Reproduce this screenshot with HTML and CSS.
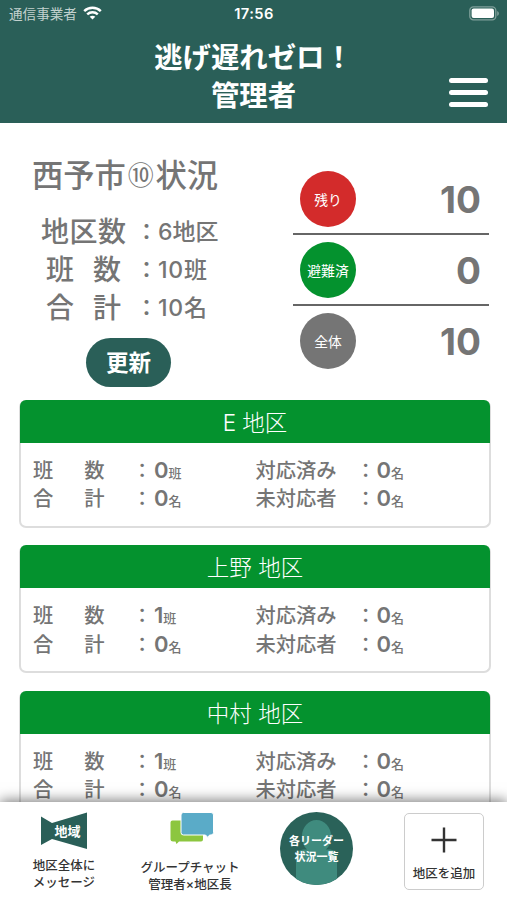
FILE: index.html
```html
<!DOCTYPE html>
<html lang="ja">
<head>
<meta charset="utf-8">
<meta name="viewport" content="width=device-width, initial-scale=1">
<title>逃げ遅れゼロ！管理者</title>
<link rel="stylesheet" href="styles.css">
</head>
<body>
<div class="app">
  <header class="header">
    <div class="status">
      <div class="carrier">通信事業者
        <svg class="wifi" width="19" height="14" viewBox="0 0 19 14" fill="none" stroke="#fff" stroke-width="2.5"><path d="M1.2 5.1C5.8.7 13.2.7 17.8 5.1"/><path d="M4.2 8.4c3-2.8 7.6-2.8 10.6 0"/><path d="M9.5 13.6 6.7 10.8c1.6-1.4 4-1.4 5.6 0z" fill="#fff" stroke="none"/></svg>
      </div>
      <div class="clock">17:56</div>
      <svg class="battery" width="31" height="15" viewBox="0 0 31 15"><rect x=".8" y=".8" width="26" height="13" rx="3.6" fill="none" stroke="#7f9f9a" stroke-width="1.3"/><rect x="2.6" y="2.6" width="22.4" height="9.4" rx="2" fill="#fff"/><path d="M28.2 5v5c1-.4 1.700-1.400 1.700-2.500S29.200 5.400 28.200 5z" fill="#7f9f9a"/></svg>
    </div>
    <div class="titlebar">
      <h1 class="title">逃げ遅れゼロ！<br>管理者</h1>
      <div class="menu"><span></span><span></span><span></span></div>
    </div>
  </header>

  <main class="content">
    <section class="summary">
      <div class="overview">
        <h2 class="city">西予市<span class="circled">⑩</span>状況</h2>
        <dl class="totals">
          <dt class="wide"><span>地</span><span>区</span><span>数</span></dt><dd><i>：</i>6地区</dd>
          <dt><span>班</span><span>数</span></dt><dd><i>：</i><span class="digits">10</span>班</dd>
          <dt><span>合</span><span>計</span></dt><dd><i>：</i><span class="digits">10</span>名</dd>
        </dl>
        <button class="refresh">更新</button>
      </div>
      <div class="counts">
        <div class="count"><span class="dot red">残り</span><b>10</b></div>
        <div class="count"><span class="dot green">避難済</span><b>0</b></div>
        <div class="count"><span class="dot gray">全体</span><b>10</b></div>
      </div>
    </section>

    <section class="card">
      <h3>E 地区</h3>
      <div class="stats">
        <span class="label"><span>班</span><span>数</span></span><i>：</i><span class="value">0<small>班</small></span>
        <span class="label">対応済み</span><i>：</i><span class="value">0<small>名</small></span>
        <span class="label"><span>合</span><span>計</span></span><i>：</i><span class="value">0<small>名</small></span>
        <span class="label">未対応者</span><i>：</i><span class="value">0<small>名</small></span>
      </div>
    </section>
    <section class="card">
      <h3>上野 地区</h3>
      <div class="stats">
        <span class="label"><span>班</span><span>数</span></span><i>：</i><span class="value">1<small>班</small></span>
        <span class="label">対応済み</span><i>：</i><span class="value">0<small>名</small></span>
        <span class="label"><span>合</span><span>計</span></span><i>：</i><span class="value">0<small>名</small></span>
        <span class="label">未対応者</span><i>：</i><span class="value">0<small>名</small></span>
      </div>
    </section>
    <section class="card">
      <h3>中村 地区</h3>
      <div class="stats">
        <span class="label"><span>班</span><span>数</span></span><i>：</i><span class="value">1<small>班</small></span>
        <span class="label">対応済み</span><i>：</i><span class="value">0<small>名</small></span>
        <span class="label"><span>合</span><span>計</span></span><i>：</i><span class="value">0<small>名</small></span>
        <span class="label">未対応者</span><i>：</i><span class="value">0<small>名</small></span>
      </div>
    </section>
  </main>

  <nav class="tabs">
    <div class="tab area">
      <svg width="48" height="38" viewBox="0 0 48 38"><path d="M1 4.500 12 11 47 .500V37L12 27 1 33z" fill="#2a5f58"/><text class="horn" x="14.500" y="24">地域</text></svg>
      <p>地区全体に<br>メッセージ</p>
    </div>
    <div class="tab chat">
      <svg width="44" height="34" viewBox="0 0 44 34"><path d="M2.500 8.500H31q2 0 2 2V27.500q0 2-2 2H9L6.500 32 5.500 29.500H3q-2.500 0-2.500-2V10.500q0-2 2-2z" fill="#8cc63f"/><path d="M13.500.500H41q2.500 0 2.500 2.500V20.500q0 2.500-2.500 2.500H39.500L38 25.500 35.500 23H13.500q-2.500 0-2.500-2.500V3q0-2.500 2.500-2.500z" fill="#5aabc8" stroke="#fff" stroke-width="1"/></svg>
      <p>グループチャット<br>管理者×地区長</p>
    </div>
    <div class="tab leader">
      <div class="badge">
        <svg width="73" height="73" viewBox="0 0 73 73"><defs><clipPath id="disc"><circle cx="36.500" cy="36.500" r="36.500"/></clipPath></defs><g clip-path="url(#disc)"><rect width="73" height="73" fill="#2a6259"/><path d="M22 24a14.500 16 0 0 1 29 0Q51 33 46 37.500H50Q57 38 57 46V73H16V46Q16 38 23 37.500H27Q22 33 22 24z" fill="#3f8b7e"/></g></svg>
        <p>各リーダー<br>状況一覧</p>
      </div>
    </div>
    <div class="tab add">
      <svg width="26" height="26" viewBox="0 0 26 26" stroke="#333" stroke-width="2.400"><path d="M13 .500V25.500M.500 13H25.500"/></svg>
      <p>地区を追加</p>
    </div>
  </nav>
</div>
</body>
</html>
```

FILE: styles.css
```css
* { box-sizing: border-box; }
body, h1, h2, h3, p, dl, dd { margin: 0; }
i { font-style: normal; }
body {
  font-family: Inter, "Noto Sans CJK JP", sans-serif;
  color: #757575;
  background: #fff;
}
.app {
  width: 507px;
  height: 900px;
  display: flex;
  flex-direction: column;
  overflow: hidden;
}

.header { flex: none; height: 123px; background: #2a5f58; color: #fff; }
.status {
  height: 28px;
  padding: 0 7px 0 9px;
  display: grid;
  grid-template-columns: 1fr auto 1fr;
  align-items: center;
}
.carrier { display: flex; align-items: center; gap: 6px; font-size: 13.6px; line-height: 28px; color: #c3d2cf; white-space: nowrap; }
.wifi { margin-top: -2px; }
.clock { margin: -1px 1px 0 0; font-size: 14.700px; font-weight: 600; letter-spacing: .4px; }
.battery { justify-self: end; margin-top: -1px; }
.titlebar { display: grid; grid-template-columns: 1fr auto 1fr; padding: 10px 19px 0; }
.title { grid-column: 2; padding-top: 1px; font-size: 28.400px; line-height: 38px; font-weight: 700; text-align: center; }
.menu { justify-self: end; display: flex; flex-direction: column; gap: 7px; padding-top: 40px; }
.menu span { width: 39px; height: 5px; border-radius: 3px; background: #fff; }

.content { flex: 1; min-height: 0; overflow: hidden; padding: 0 16px 0 19px; }
.summary { height: 277px; display: flex; justify-content: space-between; }
.overview { width: 220px; padding: 33px 0 0 13px; }
.city { font-size: 31.300px; line-height: 40px; font-weight: 500; white-space: nowrap; }
.circled { display: inline-block; width: 29.500px; text-align: center; font-size: 26px; font-weight: 400; vertical-align: 2px; line-height: 30px; }
.totals {
  margin-top: 17px;
  padding-left: 9px;
  display: grid;
  grid-template-columns: 85px 1fr;
  column-gap: 9px;
  grid-auto-rows: 38px;
  line-height: 38px;
  font-weight: 500;
  white-space: nowrap;
}
.totals dt { display: flex; justify-content: space-between; padding: 0 5px; font-size: 28px; }
.totals .wide { padding: 0; }
.totals dd { font-size: 23px; }
.totals i { display: inline-block; width: 23px; }
.digits { letter-spacing: .8px; }
.refresh {
  display: block;
  width: 85px;
  height: 49px;
  margin: 11px 0 0 54px;
  padding: 0;
  border: 0;
  border-radius: 25px;
  background: #2a5f58;
  color: #fff;
  font: 700 22.500px/49px Inter, "Noto Sans CJK JP", sans-serif;
}
.counts { width: 198px; padding: 41px 2px 0 0; }
.count { height: 71px; display: flex; align-items: center; justify-content: space-between; padding: 0 8px 0 7px; border-bottom: 2px solid #666; }
.count:last-child { border-color: transparent; }
.count b { padding-top: 2px; font-size: 37px; line-height: 44px; font-weight: 700; }
.dot { width: 56px; height: 56px; border-radius: 50%; color: #fff; font-size: 13.800px; line-height: 58px; text-align: center; }
.red { background: #d32b2b; }
.green { background: #04922e; }
.gray { background: #757575; }

.card { width: 472px; height: 128px; margin-bottom: 17.400px; border: 2px solid #ddd; border-top: 0; border-radius: 7px; }
.card h3 { margin: 0 -1px; height: 43px; border-radius: 6px 6px 0 0; background: #04922e; color: #fff; font-size: 22.500px; line-height: 46px; font-weight: 300; text-align: center; }
.stats {
  padding: 13px 0 0 12px;
  display: grid;
  grid-template-columns: 71.500px 49.500px 101.500px 82px 39px 1fr;
  grid-auto-rows: 28.300px;
  line-height: 28.300px;
  font-size: 20.300px;
  font-weight: 500;
  white-space: nowrap;
}
.stats .label { display: flex; justify-content: space-between; padding-top: 1px; }
.stats i { width: 20px; justify-self: end; padding-top: 1px; }
.value { font-size: 22px; font-weight: 600; }
.stats i:nth-child(6n + 2) { margin-right: 2px; }
.stats i:nth-child(6n + 5) { margin-right: 1px; }
.value small { font-size: 13px; font-weight: 500; }

.tabs {
  position: relative;
  flex: none;
  height: 98px;
  display: grid;
  grid-template-columns: 128px 124px 129px 126px;
  background: #fff;
  box-shadow: 0 -2px 12px rgba(0, 0, 0, .5);
  color: #333;
}
.tab { display: flex; flex-direction: column; align-items: center; text-align: center; white-space: nowrap; }
.tab svg { display: block; }
.tab p { font-size: 12.500px; line-height: 17px; font-weight: 500; }
.area { padding-top: 10px; }
.area p { margin-top: 7px; }
.horn { font-size: 13px; font-weight: 700; fill: #fff; }
.chat { padding-top: 9.500px; }
.chat svg { margin-left: 4px; }
.chat p { margin-top: 13.500px; }
.leader { padding-top: 10px; }
.badge { display: grid; place-items: center; }
.badge > * { grid-area: 1 / 1; }
.badge p { font-size: 11px; line-height: 16px; font-weight: 700; color: #fff; }
.add { width: 80px; height: 77px; margin: 11px 0 0 23px; padding-top: 12.500px; border: 1.500px solid #ccc; border-radius: 5px; }
.add p { margin-top: 12.500px; }
```
